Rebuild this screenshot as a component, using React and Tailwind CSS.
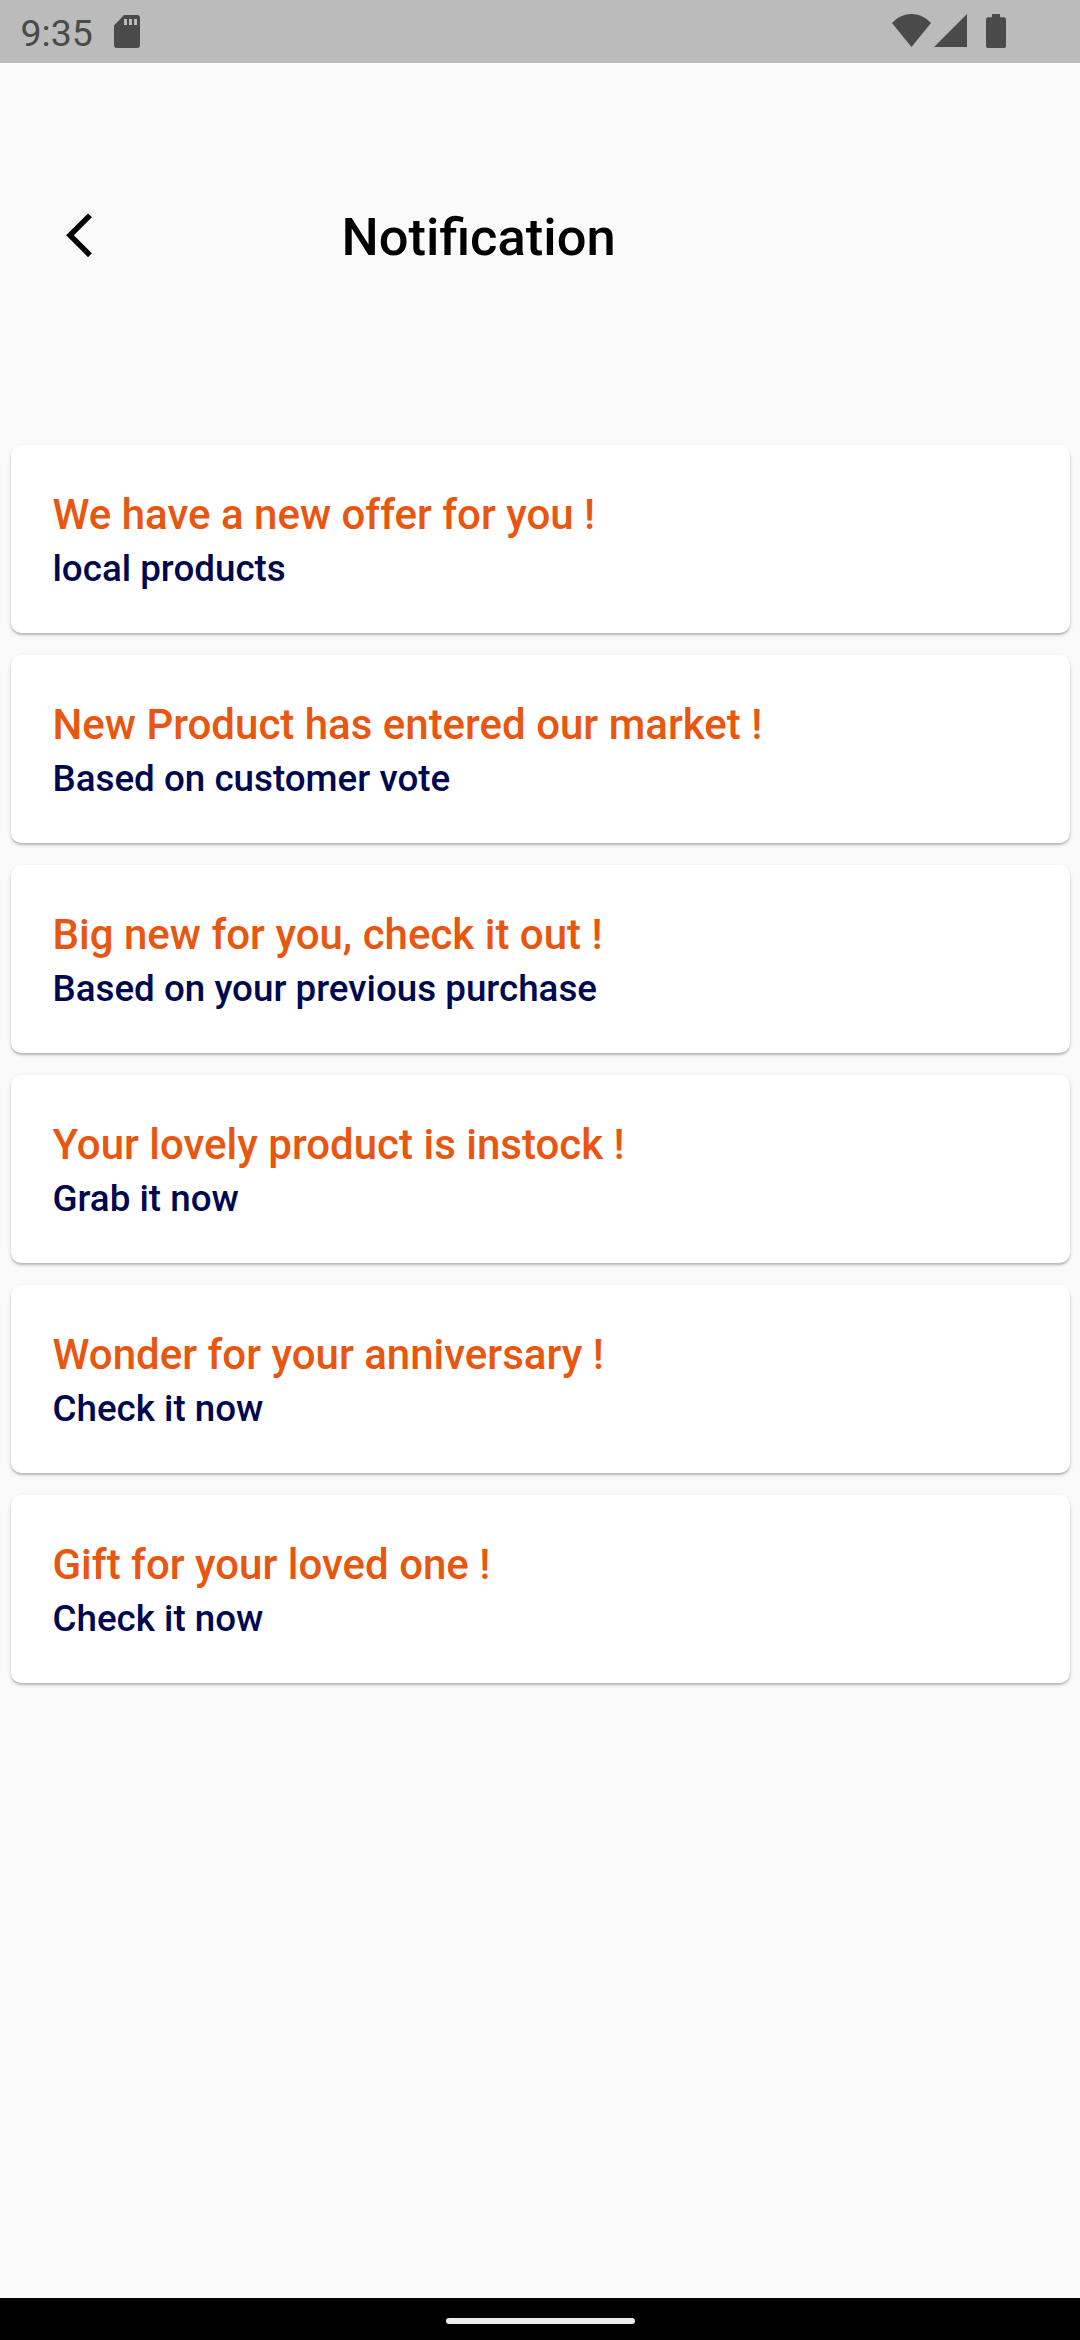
const notifications = [
  { title: 'We have a new offer for you !', subtitle: 'local products' },
  { title: 'New Product has entered our market !', subtitle: 'Based on customer vote' },
  { title: 'Big new for you, check it out !', subtitle: 'Based on your previous purchase' },
  { title: 'Your lovely product is instock !', subtitle: 'Grab it now' },
  { title: 'Wonder for your anniversary !', subtitle: 'Check it now' },
  { title: 'Gift for your loved one !', subtitle: 'Check it now' },
];

function StatusBar() {
  return (
    <div className="flex h-[63px] shrink-0 items-start bg-[#bbbbbb] text-[#4a4a4a]">
      <span className="ml-[20.5px] mt-[12px] text-[37.5px] leading-[43px] whitespace-nowrap w-[72.5px]">9:35</span>
      <svg className="ml-[21px] mt-[15px] h-[33px] w-[26px]" viewBox="0 0 26 33" fill="currentColor" aria-hidden="true">
        <path fillRule="evenodd" d="M10 0H23a3 3 0 0 1 3 3V30a3 3 0 0 1-3 3H3a3 3 0 0 1-3-3V10.500ZM10 4V10H13V4ZM15 4V10H18V4ZM20 4V10H23V4Z" />
      </svg>
      <svg className="ml-auto mt-[14px] h-[33px] w-[39px]" viewBox="0 0 39 33" fill="currentColor" aria-hidden="true">
        <path d="M0 9C11-3 28-3 39 9L19.500 33Z" />
      </svg>
      <svg className="ml-[3px] mt-[14px] h-[33px] w-[33px]" viewBox="0 0 33 33" fill="currentColor" aria-hidden="true">
        <path d="M33 0V33H0Z" />
      </svg>
      <svg className="ml-[19px] mr-[74px] mt-[14px] h-[34px] w-[20px]" viewBox="0 0 20 34" fill="currentColor" aria-hidden="true">
        <path d="M6 0H14V3.300H18a2 2 0 0 1 2 2V32a2 2 0 0 1-2 2H2a2 2 0 0 1-2-2V5.300a2 2 0 0 1 2-2H6Z" />
      </svg>
    </div>
  );
}

function NotificationCard({ title, subtitle }) {
  return (
    <li className="flex h-[188px] flex-col rounded-[10.5px] bg-white pl-[42px] pt-[45px] shadow-[0_2px_2px_0_rgba(0,0,0,0.2),0_2px_5px_0_rgba(0,0,0,0.1)]">
      <h2 className="text-[42px] font-medium leading-[49px] text-[#e8560f]">{title}</h2>
      <p className="mt-[8px] text-[36.75px] font-medium leading-[43px] text-[#000850]">{subtitle}</p>
    </li>
  );
}

export default function App() {
  return (
    <div className="flex h-[2340px] w-[1080px] flex-col overflow-hidden bg-[#fafafa] font-[Roboto,sans-serif]">
      <StatusBar />
      <header className="flex h-[382px] shrink-0 items-start pl-[53px]">
        <button className="mt-[146px]" aria-label="Back">
          <svg className="size-[52.5px]" viewBox="0 0 24 24" fill="black" aria-hidden="true">
            <path d="M17.77 3.77 16 2 6 12 16 22 17.770 20.230 9.540 12Z" />
          </svg>
        </button>
        <h1 className="ml-[236px] mt-[143px] text-[52.5px] font-medium leading-[62px] text-black">Notification</h1>
      </header>
      <ul className="flex flex-1 flex-col gap-[22px] px-[10.5px]">
        {notifications.map((item) => (
          <NotificationCard key={item.title} {...item} />
        ))}
      </ul>
      <div className="flex h-[42px] shrink-0 items-center justify-center bg-black">
        <div className="mt-[3px] h-[6px] w-[189px] rounded-full bg-[#ececec]" />
      </div>
    </div>
  );
}
